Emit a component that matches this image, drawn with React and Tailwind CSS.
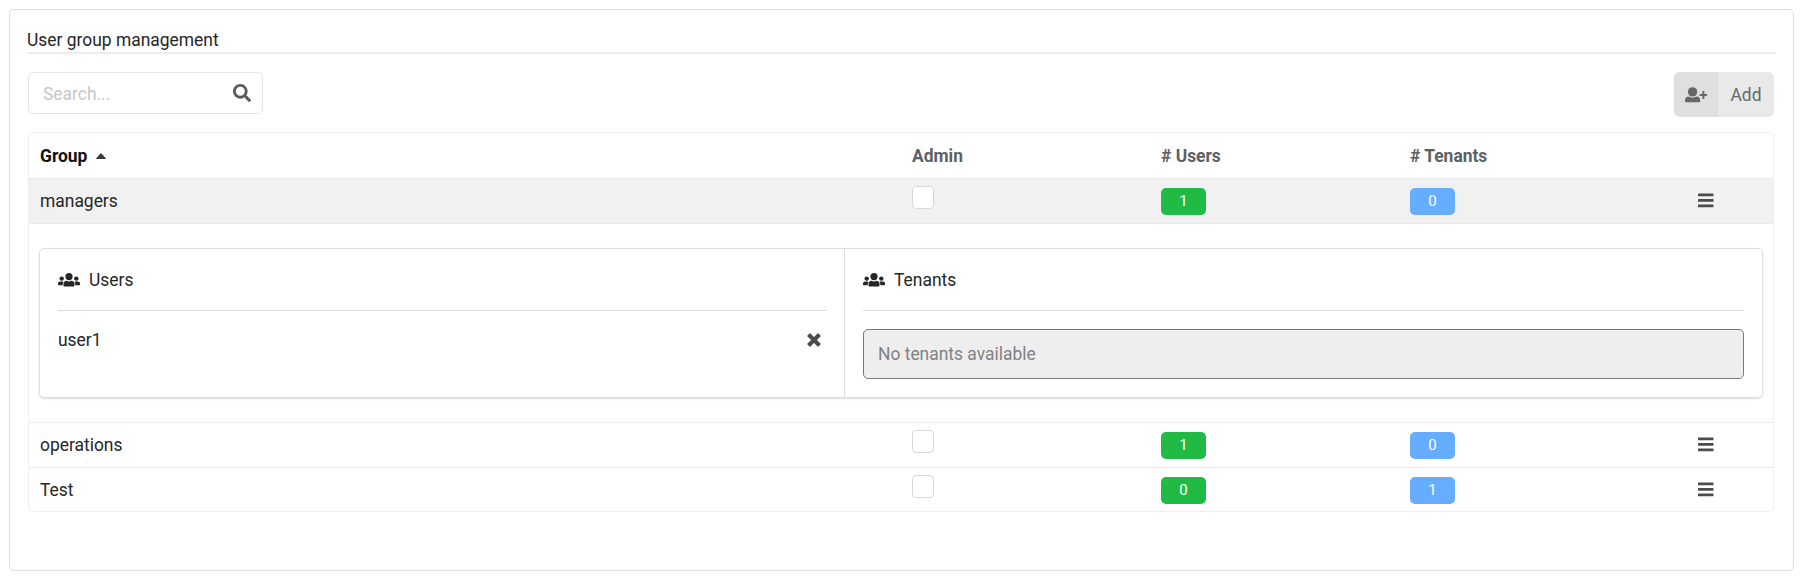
import React from 'react';
import { FaSearch } from 'react-icons/fa';

const cols = 'grid grid-cols-[872px_249px_249px_249px_1fr]';

function UsersIcon() {
  return (
    <svg className="h-[14px] w-[22px]" viewBox="0 0 22 14" fill="currentColor">
      <circle cx="11" cy="3.6" r="3.6" />
      <circle cx="3.7" cy="5.6" r="2.2" />
      <circle cx="18.3" cy="5.6" r="2.2" />
      <path d="M5.5 11C5.5 9.2 6.8 7.8 8.5 7.8Q11 9 13.5 7.8C15.2 7.8 16.5 9.2 16.5 11V12.4Q16.5 13.5 15.4 13.5H6.6Q5.5 13.5 5.5 12.4Z" />
      <path d="M2 8.4H4.4Q5.1 8.4 5.6 8.9Q4.6 10 4.6 12.3H.8Q0 12.3 0 11.5V10.4Q0 8.4 2 8.4Z" />
      <path d="M20 8.4H17.6Q16.9 8.4 16.4 8.9Q17.4 10 17.4 12.3H21.2Q22 12.3 22 11.5V10.4Q22 8.4 20 8.4Z" />
    </svg>
  );
}

function UserPlusIcon() {
  return (
    <svg className="h-[16px] w-[22px]" viewBox="0 0 22 16" fill="currentColor">
      <circle cx="7.6" cy="4.9" r="4.7" />
      <path d="M3.6 9.6Q7.6 11.8 11.6 9.6C14 9.8 15.2 11.2 15.2 13.2V14.2Q15.2 15.3 14.1 15.3H1.1Q0 15.3 0 14.2V13.2C0 11.2 1.2 9.8 3.6 9.6Z" />
      <path d="M17.4 4H19.4V7H22V9H19.4V12H17.4V9H14.6V7H17.4Z" />
    </svg>
  );
}

function CloseIcon() {
  return (
    <svg className="h-[14px] w-[14px] text-[#4b4b4b]" viewBox="0 0 14 14" fill="none" stroke="currentColor">
      <path d="M3 3L11 11M11 3L3 11" strokeWidth="4.1" strokeLinecap="square" />
    </svg>
  );
}

function MenuIcon() {
  return (
    <svg className="h-[15px] w-[16px] text-[#4b4b4b]" viewBox="0 0 16 15" fill="currentColor">
      <rect x="0" y=".6" width="15.5" height="2.6" rx=".5" />
      <rect x="0" y="6.1" width="15.5" height="2.6" rx=".5" />
      <rect x="0" y="11.6" width="15.5" height="2.6" rx=".5" />
    </svg>
  );
}

function GroupRow({ name, users, tenants, className }) {
  return (
    <div className={`${cols} ${className}`}>
      <div className="pl-[11px] pt-[10px] leading-6">{name}</div>
      <div className="pl-[11px] pt-[7px]">
        <div className="h-[23px] w-[22px] rounded-[4px] border border-[#d9d9da] bg-white" />
      </div>
      <div className="pl-[11px] pt-[9px]">
        <div className="flex h-[27px] w-[45px] items-center justify-center rounded-[5px] bg-[#21ba45] text-[15px] text-white">
          {users}
        </div>
      </div>
      <div className="pl-[11px] pt-[9px]">
        <div className="flex h-[27px] w-[45px] items-center justify-center rounded-[5px] bg-[#66acff] text-[15px] text-white">
          {tenants}
        </div>
      </div>
      <div className="pl-[50px] pt-[14px]">
        <MenuIcon />
      </div>
    </div>
  );
}

function PanelTitle({ children }) {
  return (
    <div className="flex h-[62px] items-center gap-[9px] border-b border-[#dcdcdd]">
      <UsersIcon />
      <span className="pt-px">{children}</span>
    </div>
  );
}

export default function App() {
  return (
    <div className="h-[580px] bg-white pl-[9px] pr-[7px] pt-[9px] font-['Roboto',sans-serif] text-[17.43px] text-[#262626]">
      <div className="h-[562px] rounded-[5px] border border-[#dededf] pl-[17px] pr-[17px] pt-[18px]">
        <div className="h-[26px] border-b-2 border-[#ededed] leading-[25px]">User group management</div>

        <div className="flex items-start justify-between pl-px pr-[2px] pt-[18px]">
          <div className="flex h-[42px] w-[235px] items-center justify-between rounded-[5px] border border-[#e6e6e7] pl-[14px] pr-[11px]">
            <span className="pt-[2px] text-[#c7c7c8]">Search...</span>
            <FaSearch className="h-[18px] w-[18px] text-[#5a5d60]" />
          </div>
          <div className="flex h-[45px] w-[100px] overflow-hidden rounded-[6px] bg-[#e9e9ea] text-[#66686b]">
            <div className="flex w-11 items-center justify-center bg-[#dfdfe0]">
              <UserPlusIcon />
            </div>
            <div className="flex flex-1 items-center justify-center pt-px">Add</div>
          </div>
        </div>

        <div className="ml-px mr-[2px] mt-[15px] h-[380px] overflow-hidden rounded-[5px] border border-[#f0f0f0]">
          <div className={`${cols} h-[45px] items-center pt-px font-bold text-[#5e6063]`}>
            <div className="flex items-center gap-[9px] pl-[11px] text-[#111]">
              Group
              <svg className="h-[6px] w-[10px]" viewBox="0 0 10 6" fill="#3c3c3c">
                <path d="M0.5 6Q-0.3 6 .3 5.2L4.4.6Q5 0 5.6.6L9.7 5.2Q10.3 6 9.5 6Z" />
              </svg>
            </div>
            <div className="pl-[11px]">Admin</div>
            <div className="pl-[11px]"># Users</div>
            <div className="pl-[11px]"># Tenants</div>
          </div>

          <GroupRow name="managers" users={1} tenants={0} className="h-[46px] border-y border-[#e8e8e9] bg-[#f1f1f1]" />

          <div className="h-[198px] px-[10px] pt-6">
            <div className="flex h-[150px] rounded-[5px] border border-[#dededf] shadow-[0_1px_2px_rgba(34,36,38,0.15)]">
              <div className="w-[805px] border-r border-[#dededf] pl-[18px] pr-[17px]">
                <PanelTitle>Users</PanelTitle>
                <div className="flex h-[57px] items-center justify-between pr-[6px]">
                  <span className="pt-px">user1</span>
                  <CloseIcon />
                </div>
              </div>
              <div className="flex-1 px-[18px]">
                <PanelTitle>Tenants</PanelTitle>
                <div className="mt-[18px] flex h-[50px] items-center rounded-[5px] border border-[#767a7e] bg-[#eee] pl-[14px] text-[#7f8184]">
                  No tenants available
                </div>
              </div>
            </div>
          </div>

          <GroupRow name="operations" users={1} tenants={0} className="h-[45px] border-t border-[#ebebec]" />
          <GroupRow name="Test" users={0} tenants={1} className="h-[44px] border-t border-[#e8e8e9]" />
        </div>
      </div>
    </div>
  );
}
